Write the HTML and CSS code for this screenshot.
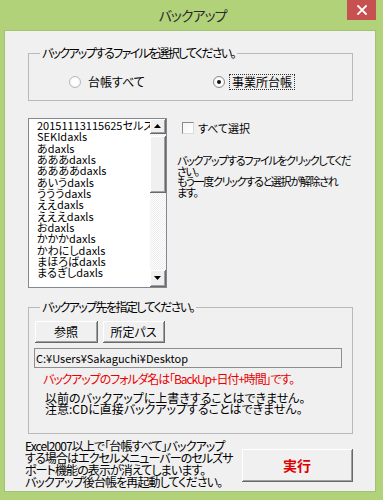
FILE: index.html
```html
<!DOCTYPE html>
<html lang="ja">
<head>
<meta charset="utf-8">
<title>バックアップ</title>
<link rel="stylesheet" href="styles.css">
</head>
<body>
<div class="window">
  <div class="titlebar">
    <span class="title">バックアップ</span>
    <span class="close">
      <svg width="10" height="10" viewBox="0 0 10 10"><path d="M1 1L9 9M9 1L1 9" stroke="#fff" stroke-width="1.8" stroke-linecap="square"/></svg>
    </span>
  </div>
  <div class="client">
    <fieldset class="group group1">
      <legend>バックアップするファイルを選択してください。</legend>
      <div class="radios">
        <div class="radio-item item1"><span class="radio"></span><span class="rlabel">台帳すべて</span></div>
        <div class="radio-item"><span class="radio checked"></span><span class="rlabel focus">事業所台帳</span></div>
      </div>
    </fieldset>

    <div class="middle">
      <div class="listbox">
        <ul class="items">
          <li>20151113115625セルズ</li>
          <li>SEKIdaxls</li>
          <li>あdaxls</li>
          <li>あああdaxls</li>
          <li>ああああdaxls</li>
          <li>あいうdaxls</li>
          <li>うううdaxls</li>
          <li>ええdaxls</li>
          <li>えええdaxls</li>
          <li>おdaxls</li>
          <li>かかかdaxls</li>
          <li>かわにしdaxls</li>
          <li>まほろばdaxls</li>
          <li>まるぎしdaxls</li>
        </ul>
        <div class="scrollbar">
          <div class="sbtn"><svg width="7" height="4" viewBox="0 0 7 4"><path d="M0 4L3.5 0L7 4Z" fill="#000"/></svg></div>
          <div class="track">
            <div class="thumb"></div>
          </div>
          <div class="sbtn"><svg width="7" height="4" viewBox="0 0 7 4"><path d="M0 0L3.5 4L7 0Z" fill="#000"/></svg></div>
        </div>
      </div>
      <div class="side">
        <div class="check-row"><span class="checkbox"></span><span>すべて選択</span></div>
        <p class="hint">バックアップするファイルをクリックしてくだ<br>さい。<br>もう一度クリックすると選択が解除され<br>ます。</p>
      </div>
    </div>

    <fieldset class="group group2">
      <legend>バックアップ先を指定してください。</legend>
      <div class="btns">
        <button class="btn b1">参照</button>
        <button class="btn b2">所定パス</button>
      </div>
      <div class="path">C:¥Users¥Sakaguchi¥Desktop</div>
      <p class="red">バックアップのフォルダ名は「BackUp+日付+時間」です。</p>
      <p class="note">以前のバックアップに上書きすることはできません。<br>注意:CDに直接バックアップすることはできません。</p>
    </fieldset>

    <div class="bottom">
      <p class="warn">Excel2007以上で「台帳すべて」バックアップ<br>する場合はエクセルメニューバーのセルズサ<br>ポート機能の表示が消えてしまいます。<br>バックアップ後台帳を再起動してください。</p>
      <button class="btn exec">実行</button>
    </div>
  </div>
</div>
</body>
</html>
```

FILE: styles.css
```css
* { box-sizing: border-box; }
html, body { margin: 0; padding: 0; }
body {
  width: 383px;
  height: 500px;
  background: #b2d27a;
  font-family: "Noto Sans CJK JP", "Noto Sans", sans-serif;
  font-feature-settings: "palt";
  font-size: 12px;
  color: #000;
  overflow: hidden;
}
.window { width: 383px; height: 500px; }
.titlebar {
  position: relative;
  height: 30px;
  text-align: center;
}
.title {
  display: inline-block;
  line-height: 30px;
  font-size: 14px;
  letter-spacing: -1px;
  color: #2a2a2a;
  padding-left: 2px;
}
.close {
  position: absolute;
  top: 0;
  right: 7px;
  width: 29px;
  height: 20px;
  background: #c75050;
  display: flex;
  align-items: center;
  justify-content: center;
}
.client {
  margin: 0 7px 0 4px;
  height: 462px;
  background: #f0f0f0;
  border: 1px solid #a3c276;
  padding-top: 16px;
}
.group {
  margin: 0 0 0 23px;
  width: 325px;
  border: 1px solid #b9b9b9;
  padding: 0;
}
.group legend {
  margin-left: 11px;
  padding: 0 2px;
  line-height: 12px;
  height: 12px;
  font-size: 12px;
}
.group1 legend { letter-spacing: -1.7px; }
.group2 legend { letter-spacing: -1.6px; }
.radios {
  display: flex;
  padding: 15px 0 10px 40px;
  height: 41px;
}
.radio-item {
  display: flex;
  align-items: center;
  height: 16px;
}
.radio-item.item1 { width: 144px; }
.radio {
  width: 12px;
  height: 12px;
  border-radius: 50%;
  border: 1px solid #b8b8b8;
  background: radial-gradient(circle at 50% 50%, #ffffff 40%, #ececec 100%);
  display: flex;
  align-items: center;
  justify-content: center;
  margin-right: 4px;
}
.radio.checked { border-color: #8a8a8a; }
.radio.checked::after {
  content: "";
  width: 4px;
  height: 4px;
  border-radius: 50%;
  background: #111;
}
.rlabel {
  padding: 0 2px;
  border: 1px solid transparent;
  line-height: 14px;
  font-size: 12px;
}
.rlabel.focus { border: 1px dotted #333; }

.middle {
  display: flex;
  margin: 17px 0 0 23px;
}
.listbox {
  width: 139px;
  height: 170px;
  border: 1px solid #828790;
  background: #fff;
  display: flex;
}
.items {
  list-style: none;
  margin: 0;
  padding: 1px 0 0 8px;
  flex: 1;
  overflow: hidden;
  white-space: nowrap;
}
.items li {
  height: 11.33px;
  line-height: 11.33px;
  font-size: 11px;
}
.scrollbar {
  width: 16px;
  display: flex;
  flex-direction: column;
  background: #f0f0f0;
}
.sbtn {
  height: 15px;
  display: flex;
  align-items: center;
  justify-content: center;
  background: #f0f0f0;
  border-right: 1px solid #696969;
  border-bottom: 1px solid #696969;
  box-shadow: inset 1px 1px #fff, inset -1px -1px #a0a0a0;
}
.sbtn:last-child { height: 17px; }
.track {
  flex: 1;
  background-color: #f4f4f4;
  background-image: repeating-conic-gradient(#ffffff 0 25%, #ececec 0 50%);
  background-size: 2px 2px;
  padding-top: 2px;
}
.thumb {
  height: 57px;
  background: #f0f0f0;
  border-right: 1px solid #696969;
  border-bottom: 1px solid #696969;
  box-shadow: inset 1px 1px #fff, inset -1px -1px #a0a0a0;
}
.side {
  margin-left: 10px;
  width: 190px;
}
.check-row {
  display: flex;
  align-items: center;
  height: 12px;
  margin-top: 4px;
  padding-left: 5px;
  line-height: 12px;
  font-size: 11px;
}
.checkbox {
  width: 12px;
  height: 12px;
  border: 1px solid #8a8a8a;
  border-right-color: #dadada;
  border-bottom-color: #dadada;
  background: linear-gradient(135deg, #f4f4f4, #ffffff);
  margin-right: 4px;
}
.hint {
  margin: 21px 0 0 0;
  font-size: 11px;
  letter-spacing: -1.3px;
  line-height: 10.6px;
  white-space: nowrap;
}

.group2 { margin-top: 13px; }
.btns {
  display: flex;
  gap: 5px;
  padding: 8px 0 0 6px;
}
.btn {
  font-family: inherit;
  font-feature-settings: "palt";
  font-size: 12px;
  color: #000;
  background: #f0f0f0;
  border: none;
  border-right: 1px solid #696969;
  border-bottom: 1px solid #696969;
  box-shadow: inset 1px 1px #fff, inset -1px -1px #a0a0a0;
  padding: 0;
  margin: 0;
  line-height: 12px;
}
.b1 { width: 63px; height: 22px; }
.b2 { width: 62px; height: 22px; }
.path {
  margin: 5px 0 0 5px;
  width: 308px;
  height: 20px;
  border: 1px solid #8e8e8e;
  line-height: 18px;
  padding-left: 1px;
  font-size: 11px;
  background: #f0f0f0;
}
.red {
  margin: 5px 0 0 14px;
  color: #ea0000;
  line-height: 12px;
  font-size: 12px;
  letter-spacing: -1.1px;
}
.note {
  margin: 7px 0 0 16px;
  line-height: 11px;
  font-size: 12px;
  padding-bottom: 19px;
}
.bottom {
  display: flex;
  margin: 6px 0 0 20px;
}
.warn {
  margin: 0;
  width: 217px;
  line-height: 12px;
  font-size: 12px;
  letter-spacing: -0.9px;
  white-space: nowrap;
}
.exec {
  width: 111px;
  height: 33px;
  margin-top: 9px;
  color: #e00000;
  font-weight: bold;
  font-size: 14px;
}
```
